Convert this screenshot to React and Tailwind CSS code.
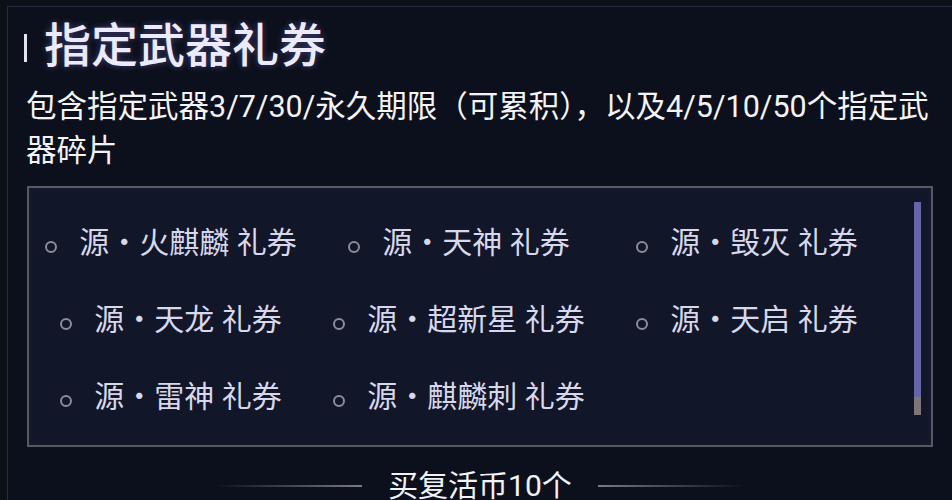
const items = [
  '源・火麒麟 礼券',
  '源・天神 礼券',
  '源・毁灭 礼券',
  '源・天龙 礼券',
  '源・超新星 礼券',
  '源・天启 礼券',
  '源・雷神 礼券',
  '源・麒麟刺 礼券',
];

function VoucherItem({ label }) {
  return (
    <div className="flex items-center justify-center h-[77px]">
      <span className="w-[12px] h-[12px] rounded-full border-2 border-[#8c8c9a] mt-[8px] mr-[22px]" />
      <span className="text-[30px] leading-none text-[#d8d8ec] whitespace-nowrap">{label}</span>
    </div>
  );
}

export default function App() {
  return (
    <div className="w-[952px] h-[500px] overflow-hidden bg-[#0a0f18] pt-[6px] pl-[7px] font-[Roboto,'Noto_Sans_CJK_SC',sans-serif]">
      <div className="h-full border-l border-t border-[#262c40] bg-[#0c101c] flex flex-col">
        {/* Title */}
        <div className="flex items-center pl-[16px] mt-[15px] h-[48px]">
          <span className="w-[3px] h-[28px] bg-[#e2e2f2] mr-[17px] mt-[4px]" />
          <h1 className="text-[47px] leading-none font-medium text-[#ebeaff] [text-shadow:0_0_6px_rgba(150,140,255,0.4)]">
            指定武器礼券
          </h1>
        </div>

        {/* Description */}
        <p className="mt-[16px] pl-[18px] pr-[6px] text-[30.5px] leading-[44px] text-[#f4f4f8]">
          包含指定武器3/7/30/永久期限（可累积），以及4/5/10/50个指定武器碎片
        </p>

        {/* Voucher list */}
        <div className="relative mt-[13px] ml-[19px] w-[906px] h-[261px] shrink-0 border-2 border-[#565862] bg-[#121629] shadow-[inset_0_0_8px_rgba(255,255,255,0.04)]">
          <div className="grid grid-cols-3 w-[864px] -ml-[2px] pt-[16px]">
            {items.map((label) => (
              <VoucherItem key={label} label={label} />
            ))}
          </div>
          <div className="absolute right-[10px] top-[14px] w-[7px] h-[213px] flex flex-col">
            <div className="flex-1 bg-[#6466a8]" />
            <div className="h-[18px] bg-[#7d7677]" />
          </div>
        </div>

        {/* Footer */}
        <div className="flex items-center justify-center mt-[24px] h-[36px]">
          <span className="w-[146px] h-[2px] bg-gradient-to-r from-transparent to-[#7a7a88]" />
          <span className="mx-[26px] text-[30px] leading-none text-[#f2f2f6]">买复活币10个</span>
          <span className="w-[146px] h-[2px] bg-gradient-to-l from-transparent to-[#7a7a88]" />
        </div>
      </div>
    </div>
  );
}
